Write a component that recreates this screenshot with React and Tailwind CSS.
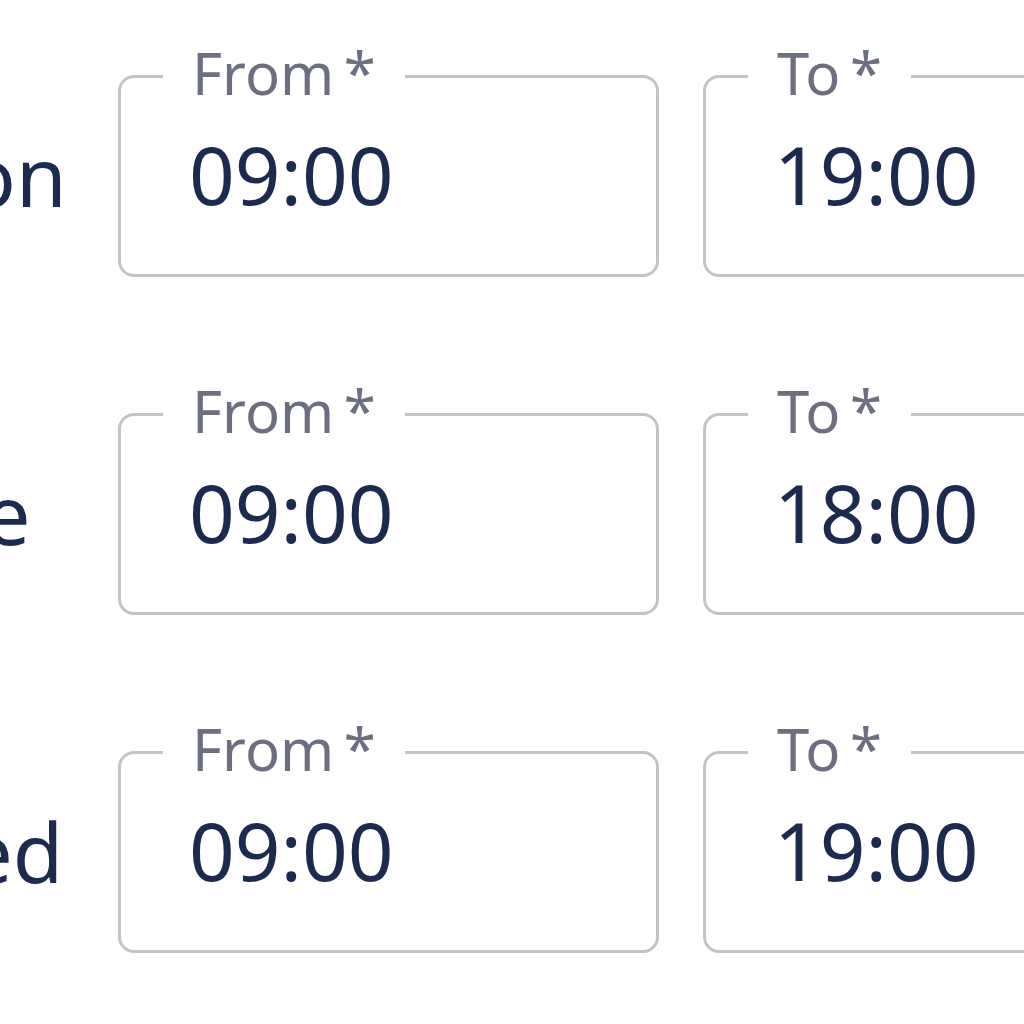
import React from "react";

const rows = [
  { day: "Mon", from: "09:00", to: "19:00" },
  { day: "Tue", from: "09:00", to: "18:00" },
  { day: "Wed", from: "09:00", to: "19:00" },
];

function Field({ label, value }) {
  return (
    <div className="relative shrink-0 w-[541px] h-[202px] border-[3px] border-[#c4c4c4] rounded-[16px] flex items-center">
      <span className="absolute left-[42px] top-[-35px] px-[29px] bg-white text-[58px] leading-[60px] text-[#6b6f80] whitespace-nowrap">
        {label}{"\u2009"}*
      </span>
      <span className="pl-[68px] pb-[4px] text-[80px] leading-none text-[#1b2a4e]">{value}</span>
    </div>
  );
}

export default function App() {
  return (
    <div
      className="w-[1024px] h-[1024px] overflow-hidden bg-white"
      style={{ fontFamily: '"Noto Sans", sans-serif' }}
    >
      <div className="ml-[-108px] pt-[75px] flex flex-col gap-[136px]">
        {rows.map((r) => (
          <div key={r.day} className="flex items-center">
            <span className="w-[226px] shrink-0 pb-[2px] text-[82px] leading-none text-[#1b2a4e]">{r.day}</span>
            <Field label="From" value={r.from} />
            <div className="w-[44px] shrink-0" />
            <Field label="To" value={r.to} />
          </div>
        ))}
      </div>
    </div>
  );
}
